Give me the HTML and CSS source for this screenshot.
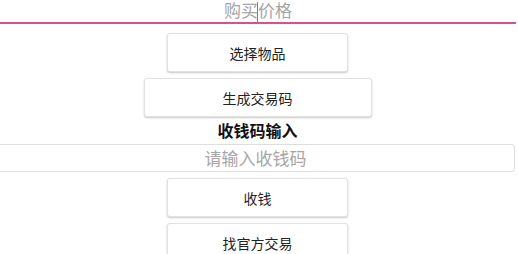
FILE: index.html
```html
<!DOCTYPE html>
<html lang="zh-CN">
<head>
<meta charset="utf-8">
<title>交易</title>
<link rel="stylesheet" href="styles.css">
</head>
<body>
<div class="page">
  <div class="price-field">
    <input class="price-input" type="text" placeholder="购买价格">
    <span class="caret"></span>
  </div>
  <button class="btn btn-narrow first">选择物品</button>
  <button class="btn btn-wide">生成交易码</button>
  <div class="title">收钱码输入</div>
  <input class="code-input" type="text" placeholder="请输入收钱码">
  <button class="btn btn-narrow">收钱</button>
  <button class="btn btn-narrow">找官方交易</button>
</div>
</body>
</html>
```

FILE: styles.css
```css
html, body {
  margin: 0;
  padding: 0;
  background: #ffffff;
  overflow: hidden;
}
.page {
  width: 515px;
  display: flex;
  flex-direction: column;
  align-items: center;
  font-family: "Noto Sans CJK SC", "Noto Sans", sans-serif;
}
.price-field {
  position: relative;
  align-self: flex-start;
  width: 516px;
}
.price-input {
  display: block;
  box-sizing: border-box;
  width: 516px;
  height: 24px;
  margin: 0;
  padding: 0 0 3px 0;
  border: none;
  border-bottom: 2px solid #d9508a;
  outline: none;
  background: transparent;
  font-family: inherit;
  font-size: 17px;
  line-height: 19px;
  text-align: center;
  color: #222;
}
.price-input::placeholder {
  color: #a6a6a6;
}
.caret {
  position: absolute;
  left: 257px;
  top: 2px;
  width: 1px;
  height: 20px;
  background: #d9508a;
}
.btn {
  box-sizing: border-box;
  height: 39px;
  margin: 6px 0 0 0;
  padding: 0;
  border: 1px solid #e2e2e2;
  border-radius: 3px;
  background: #ffffff;
  box-shadow: 0 1px 2px rgba(0, 0, 0, 0.22);
  font-family: inherit;
  font-size: 14px;
  color: #222;
}
.btn.first {
  margin-top: 9px;
}
.btn-narrow {
  width: 181px;
}
.btn-wide {
  width: 228px;
}
.title {
  height: 27px;
  line-height: 27px;
  font-size: 16px;
  font-weight: bold;
  color: #111;
}
.code-input {
  box-sizing: border-box;
  align-self: flex-start;
  width: 519px;
  height: 28px;
  margin: 0 0 0 -4px;
  padding: 0 0 1px 0;
  border: 1px solid #dedede;
  border-radius: 3px;
  outline: none;
  background: #fff;
  font-family: inherit;
  font-size: 17px;
  text-align: center;
  color: #222;
}
.code-input::placeholder {
  color: #a6a6a6;
}
```
